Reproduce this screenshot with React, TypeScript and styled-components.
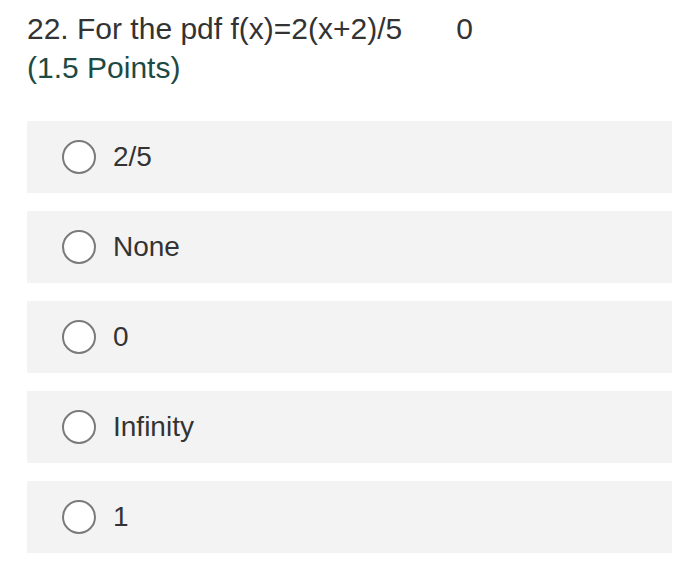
import styled, { createGlobalStyle } from "styled-components";

const GlobalStyle = createGlobalStyle`
  body {
    margin: 0;
    background: #ffffff;
    font-family: "Liberation Sans", Arial, sans-serif;
  }
`;

const Page = styled.div`
  width: 700px;
  height: 565px;
  padding: 9px 28px 0 27px;
  box-sizing: border-box;
`;

const Header = styled.div`
  font-size: 30px;
  line-height: 39px;
  color: #333333;
`;

const TitleRow = styled.div`
  display: flex;
  align-items: baseline;
  gap: 54px;
`;

const Points = styled.div`
  color: #1d4a43;
`;

const Options = styled.div`
  display: flex;
  flex-direction: column;
  gap: 18px;
  margin-top: 34px;
`;

const Option = styled.label`
  display: flex;
  align-items: center;
  gap: 17px;
  height: 72px;
  padding-left: 35px;
  background: #f3f3f3;
  font-size: 28px;
  color: #333333;
  cursor: pointer;
`;

const Radio = styled.span`
  width: 34px;
  height: 34px;
  box-sizing: border-box;
  border: 2.5px solid #7a7a7a;
  border-radius: 50%;
  background: #ffffff;
  flex-shrink: 0;
`;

const choices = ["2/5", "None", "0", "Infinity", "1"];

export default function App() {
  return (
    <>
      <GlobalStyle />
      <Page>
        <Header>
          <TitleRow>
            <span>22. For the pdf f(x)=2(x+2)/5</span>
            <span>0</span>
          </TitleRow>
          <Points>(1.5 Points)</Points>
        </Header>
        <Options>
          {choices.map((c) => (
            <Option key={c}>
              <Radio />
              <span>{c}</span>
            </Option>
          ))}
        </Options>
      </Page>
    </>
  );
}
